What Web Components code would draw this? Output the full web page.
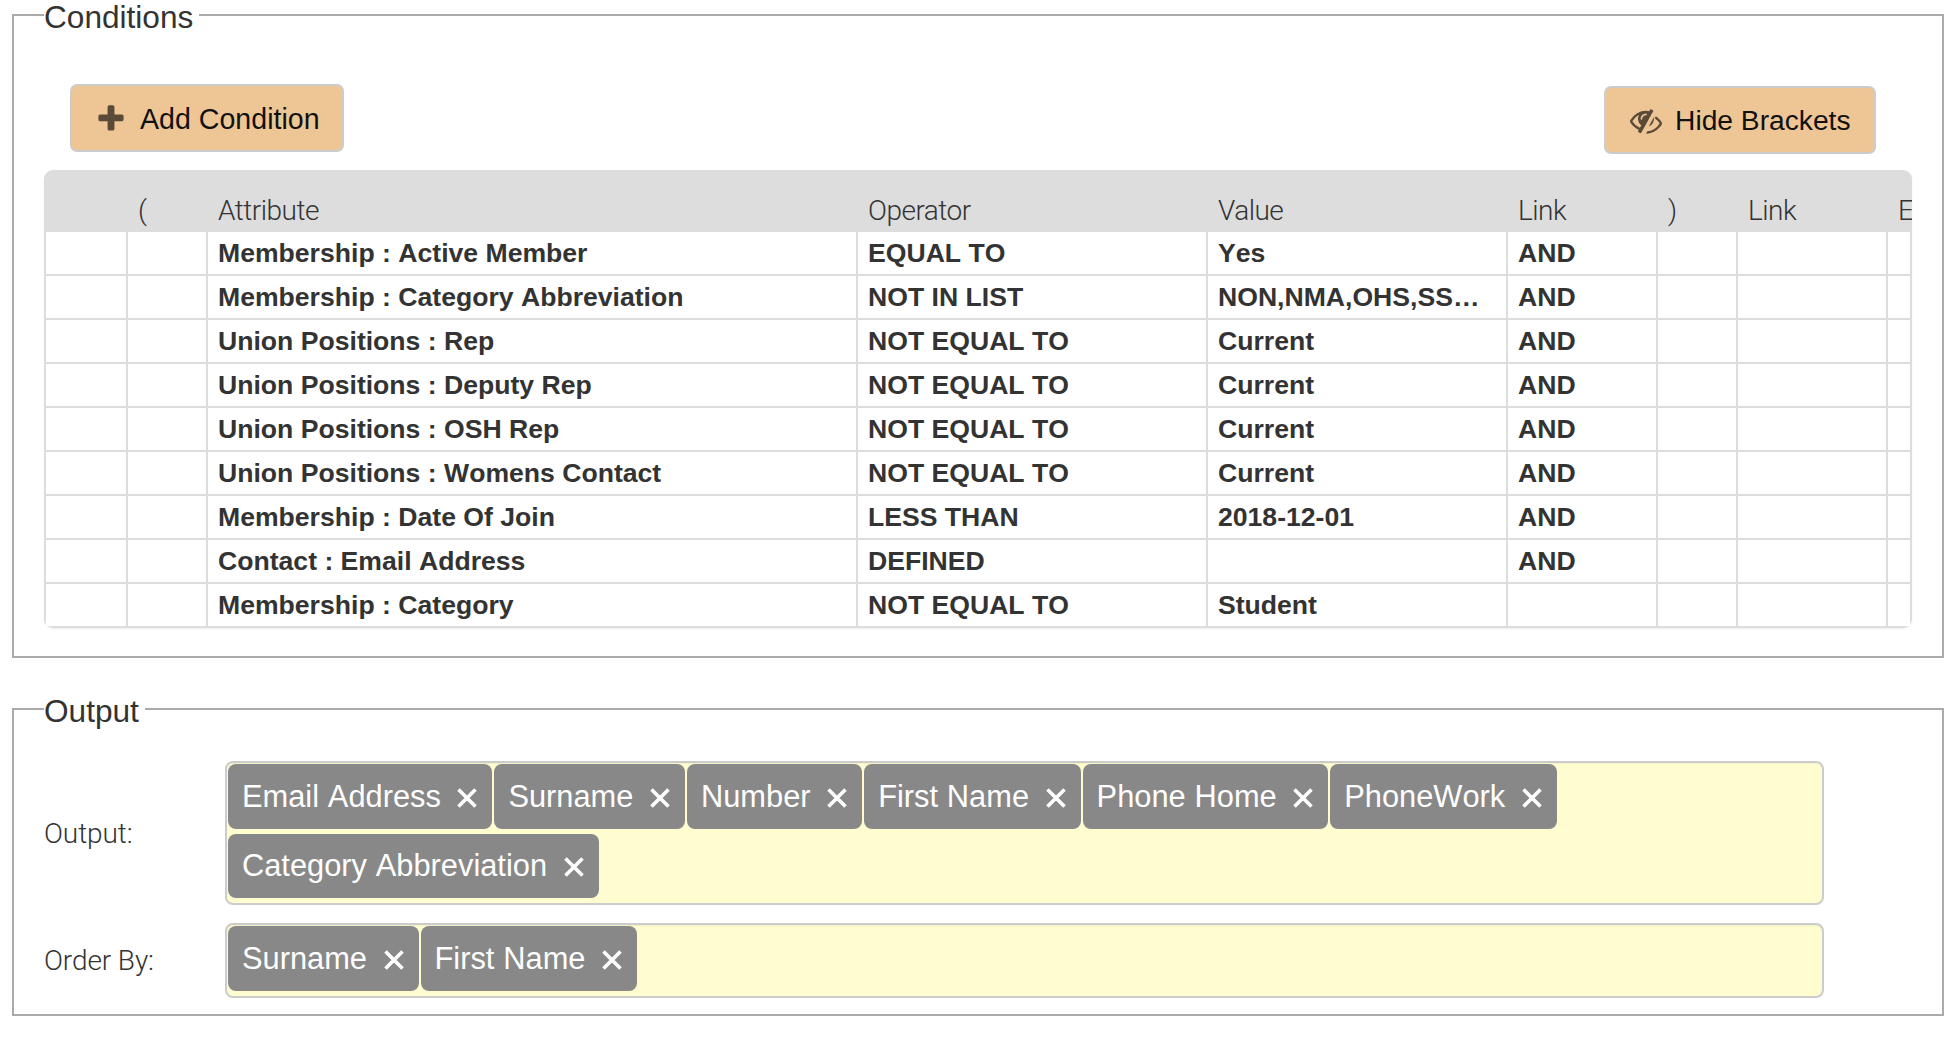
<!DOCTYPE html>
<html><head><meta charset="utf-8"><title>Conditions</title>
<style>
html,body{margin:0;padding:0;background:#fff}
body{font-family:"Liberation Sans",Arial,sans-serif;color:#333}
x-panel+x-panel{margin-top:36px}
</style></head><body>
<x-panel legend="Conditions" style="--pad-bottom:28px;">
  <x-toolbar>
    <x-button icon="plus" style="margin:19px 0 0 26px;--pl:23px;--gap:13px;--pr:22px;--pt:2px;font-size:28.6px">Add Condition</x-button>
    <x-button icon="eye" style="margin:21px 36px 0 0;--pl:24px;--gap:13.5px;--pr:23.5px;--pt:0px;font-size:28.2px">Hide Brackets</x-button>
  </x-toolbar>
  <x-table>
    <x-row header></x-row>
    <x-row attr="Membership : Active Member" op="EQUAL TO" val="Yes" link="AND"></x-row>
    <x-row attr="Membership : Category Abbreviation" op="NOT IN LIST" val="NON,NMA,OHS,SS…" link="AND"></x-row>
    <x-row attr="Union Positions : Rep" op="NOT EQUAL TO" val="Current" link="AND"></x-row>
    <x-row attr="Union Positions : Deputy Rep" op="NOT EQUAL TO" val="Current" link="AND"></x-row>
    <x-row attr="Union Positions : OSH Rep" op="NOT EQUAL TO" val="Current" link="AND"></x-row>
    <x-row attr="Union Positions : Womens Contact" op="NOT EQUAL TO" val="Current" link="AND"></x-row>
    <x-row attr="Membership : Date Of Join" op="LESS THAN" val="2018-12-01" link="AND"></x-row>
    <x-row attr="Contact : Email Address" op="DEFINED" val="" link="AND"></x-row>
    <x-row attr="Membership : Category" op="NOT EQUAL TO" val="Student" link=""></x-row>
  </x-table>
</x-panel>
<x-panel legend="Output" style="--pad-bottom:16px;--pad-top:37px">
  <x-field label="Output:">
    <x-tag>Email Address</x-tag><x-tag>Surname</x-tag><x-tag>Number</x-tag><x-tag>First Name</x-tag><x-tag>Phone Home</x-tag><x-tag>PhoneWork</x-tag><x-tag>Category Abbreviation</x-tag>
  </x-field>
  <x-field label="Order By:" style="margin-top:18px">
    <x-tag>Surname</x-tag><x-tag>First Name</x-tag>
  </x-field>
</x-panel>
<script>
const LIGHT='"Roboto","Liberation Sans",sans-serif';
function def(name,html,extra){
  const t=document.createElement('template');t.innerHTML=html;
  customElements.define(name,class extends HTMLElement{
    constructor(){super();this.attachShadow({mode:'open'}).appendChild(t.content.cloneNode(true));}
    connectedCallback(){extra&&extra(this,this.shadowRoot);}
  });
}
def('x-panel',`<style>
:host{display:block;margin:0 10px 0 12px}
fieldset{margin:0;border:2px solid #aaa;padding:var(--pad-top,0) 30px var(--pad-bottom,0);min-width:0}
legend{padding:0 6px 0 0;font:31.6px/35px "Liberation Sans",Arial,sans-serif;color:#333;height:30px;font-kerning:none}
</style><fieldset><legend></legend><slot></slot></fieldset>`,(h,s)=>{s.querySelector('legend').textContent=h.getAttribute('legend')});
def('x-toolbar',`<style>:host{display:flex;justify-content:space-between;align-items:flex-start;height:105px;margin-top:35px;box-sizing:border-box}</style><slot></slot>`);
const PLUS='M1600 736v192q0 40-28 68t-68 28h-416v416q0 40-28 68t-68 28h-192q-40 0-68-28t-28-68v-416h-416q-40 0-68-28t-28-68v-192q0-40 28-68t68-28h416v-416q0-40 28-68t68-28h192q40 0 68 28t28 68v416h416q40 0 68 28t28 68z';
const EYE='M555 1335l78-141q-87-63-136-159t-49-203q0-121 61-225-229 117-381 353 167 258 427 375zm389-759q0-20-14-34t-34-14q-125 0-214.5 89.5t-89.5 214.5q0 20 14 34t34 14 34-14 14-34q0-86 61-147t147-61q20 0 34-14t14-34zm363-191q0 7-1 9-106 189-316 567t-315 566l-49 89q-10 16-28 16-12 0-134-70-16-10-16-28 0-12 44-87-143-65-263.5-173t-208.5-245q-20-31-20-69t20-69q153-235 380-371t496-136q89 0 180 17l54-97q10-16 28-16 5 0 18 6t31 15.5 33 18.5 31.5 18.5 19.5 11.5q16 10 16 27zm37 447q0 139-79 253.5t-209 164.5l280-502q8 45 8 84zm448 256q0 35-20 69-39 64-109 145-150 172-347.5 267t-419.5 95l74-132q212-18 392.5-137t301.5-307q-115-179-282-294l63-112q95 64 182.5 153t144.5 184q20 34 20 69z';
def('x-button',`<style>
:host{display:inline-flex;align-items:center;box-sizing:border-box;height:68px;border:2px solid #ccc;border-radius:7px;background:#eec695;color:#111;font-family:"Liberation Sans",Arial,sans-serif;padding:var(--pt) var(--pr) 0 var(--pl);white-space:nowrap;font-kerning:none}
svg{width:32px;height:32px;fill:#5a4a38;margin-right:var(--gap);flex:none}
</style><svg viewBox="0 0 1792 1792"><path></path></svg><slot></slot>`,(h,s)=>{s.querySelector('path').setAttribute('d',h.getAttribute('icon')==='plus'?PLUS:EYE)});
def('x-table',`<style>:host{display:block;border-radius:9px;overflow:hidden;box-shadow:0 1px 2px rgba(0,0,0,.08)}</style><slot></slot>`);
def('x-row',`<style>
:host{display:grid;grid-template-columns:84px 80px 650px 350px 300px 150px 80px 150px 24px;font:bold 26.6px/42px "Liberation Sans",Arial,sans-serif;font-kerning:none;color:#333;height:44px;box-sizing:border-box;overflow:hidden}
:host([header]){height:62px;background:#ddd;font:300 28px/30px ${LIGHT};letter-spacing:-.5px;color:#333}
.c{box-sizing:border-box;padding-left:10px;white-space:nowrap;overflow:hidden;border-right:2px solid #ddd;border-bottom:2px solid #ddd;height:44px}
.c:first-child{border-left:2px solid #ddd}
:host([header]) .c{border:0;height:62px;padding-top:26px;padding-left:10px}
</style><div id="r" style="display:contents"></div>`,(h,s)=>{
  const hd=h.hasAttribute('header');
  const vals=hd?['','(','Attribute','Operator','Value','Link',')','Link','E']:['','',h.getAttribute('attr'),h.getAttribute('op'),h.getAttribute('val'),h.getAttribute('link'),'','',''];
  const r=s.getElementById('r');
  vals.forEach(v=>{const d=document.createElement('div');d.className='c';d.textContent=v;r.appendChild(d)});
});
def('x-field',`<style>
:host{display:grid;grid-template-columns:181px 1599px;align-items:center}
.l{font:300 28px ${LIGHT};letter-spacing:-.1px;color:#333;padding-top:1px}
.b{box-sizing:border-box;border:2px solid #ccc;border-radius:8px;background:#fffdd0;padding:1px 1px 5px 1px;display:flex;flex-wrap:wrap;gap:5px 2px;box-shadow:inset 0 1px 1px rgba(0,0,0,.05)}
</style><div class="l"></div><div class="b"><slot></slot></div>`,(h,s)=>{s.querySelector('.l').textContent=h.getAttribute('label')});
def('x-tag',`<style>
:host{display:inline-flex;align-items:center;box-sizing:border-box;height:64.5px;background:#888;color:#fff;border-radius:8px;padding:1px 15px 0 14px;font:30.8px "Liberation Sans",Arial,sans-serif;font-kerning:none;word-spacing:.3px;white-space:nowrap}
svg{width:20px;height:20px;margin-left:16.6px;flex:none;stroke:#fff;stroke-width:3.6;fill:none;margin-top:2px}
</style><slot></slot><svg viewBox="0 0 20 20"><path d="M1.5 1.5L18.5 18.5M18.5 1.5L1.5 18.5"></path></svg>`);
</script>
</body></html>
